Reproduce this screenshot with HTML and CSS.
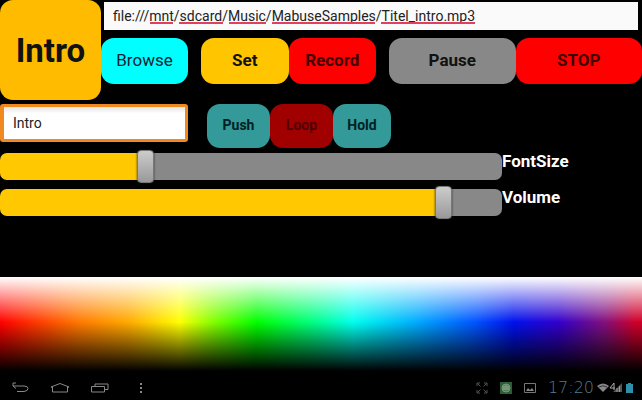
FILE: index.html
```html
<!DOCTYPE html>
<html lang="en">
<head>
  <meta charset="UTF-8">
  <title>Sample Player</title>
  <link rel="stylesheet" href="styles.css">
</head>
<body>

<main>
  <section class="top">
    <button type="button" class="pad">Intro</button>
    <div class="top-right">
      <div class="url">
        <input type="text" class="url-input" aria-label="File" spellcheck="false" value="file:///mnt/sdcard/Music/MabuseSamples/Titel_intro.mp3">
        <!-- spelling marks -->
        <svg class="marks" width="400" height="2" aria-hidden="true">
          <path d="M37 1H60M66 1H110M116 1H153M159 1H262M268 1H362" stroke="#e0405e" stroke-width="2"/>
        </svg>
      </div>
      <div class="buttons">
        <div class="group one">
          <button type="button" class="cyan">Browse</button>
        </div>
        <div class="group two">
          <button type="button" class="yellow">Set</button>
          <button type="button" class="red">Record</button>
        </div>
        <div class="group three">
          <button type="button" class="gray">Pause</button>
          <button type="button" class="red">STOP</button>
        </div>
      </div>
    </div>
  </section>

  <section class="edit">
    <input type="text" class="name-input" aria-label="Name" value="Intro">
    <div class="modes">
      <button type="button" class="teal">Push</button>
      <button type="button" class="darkred">Loop</button>
      <button type="button" class="teal hold">Hold</button>
    </div>
  </section>

  <section class="sliders">
    <div class="slider-row">
      <input type="range" id="fontsize" min="0" max="1000" value="282" style="--value: 29%">
      <label for="fontsize">FontSize</label>
    </div>
    <div class="slider-row">
      <input type="range" id="volume" min="0" max="1000" value="897" style="--value: 88%">
      <label for="volume">Volume</label>
    </div>
  </section>

  <div class="palette" role="img" aria-label="Color palette"></div>
</main>

<footer class="bar">
  <nav class="nav">
    <button type="button" aria-label="Back">
      <svg width="20" height="12" viewBox="0 0 20 12"><path d="M6 1H3V4H14Q18 4 18 6.500T14 9.500H7M3 4L6 6.500"/></svg>
    </button>
    <button type="button" aria-label="Home">
      <svg width="20" height="12" viewBox="0 0 20 12"><path d="M1 5L10 1.500L19 5H17.500V10H2.500V5Z"/></svg>
    </button>
    <button type="button" aria-label="Recent apps">
      <svg width="20" height="12" viewBox="0 0 20 12"><path d="M1.500 4.500H14.500V10H1.500ZM5 4V2H18V7.500H15"/></svg>
    </button>
    <button type="button" aria-label="Menu">
      <svg width="20" height="12" viewBox="0 0 20 12"><path d="M11 1V3M11 5V7M11 9V11" stroke-width="2"/></svg>
    </button>
  </nav>
  <div class="status">
    <svg width="12" height="12" viewBox="0 0 12 12"><path d="M4.500 4.500L1.500 1.500M1 4V1H4M7.500 4.500L10.500 1.500M8 1H11V4M4.500 7.500L1.500 10.500M1 8V11H4M7.500 7.500L10.500 10.500M8 11H11V8" stroke="#555" fill="none"/></svg>
    <svg width="12" height="12" viewBox="0 0 12 12"><path d="M0 0H12V12H0Z" fill="#2c5c34"/><circle cx="6" cy="6" r="4" fill="#4c7c54" stroke="#7a9a7a"/><path d="M4 4V8M6 3V8M8 4V8" stroke="#a0b0a0"/></svg>
    <svg width="12" height="12" viewBox="0 0 12 12"><path d="M.5 1.500H11.500V10.500H.5Z" stroke="#777" fill="none"/><path d="M2 9L4 6L6 8L8 6L10 9Z" fill="#888"/></svg>
    <time class="clock">17:20</time>
    <svg class="signal" width="38" height="12" viewBox="0 0 38 12">
      <path d="M0 4Q6 -1 12 4L6 10Z" fill="#888"/>
      <path d="M2 5Q6 2.500 10 5" stroke="#333" fill="none"/>
      <path d="M17 8V1L13 6H18" stroke="#aaa" fill="none"/>
      <path d="M25 1V10H16Z" fill="#555"/>
      <path d="M20 6V10M22.500 4V10" stroke="#999"/>
      <path d="M31 1H34V2H36V11H29V2H31Z" fill="#2e8fa8"/>
    </svg>
  </div>
</footer>

</body>
</html>
```
FILE: styles.css
```css
* {
  box-sizing: border-box;
}
body {
  margin: 0;
  min-height: 100vh;
  display: flex;
  flex-direction: column;
  background: #000;
  color: #fff;
  font-family: Roboto, "Liberation Sans", sans-serif;
}
main {
  flex: 1;
  display: flex;
  flex-direction: column;
}
button,
input {
  font-family: inherit;
  margin: 0;
  border: none;
}
button {
  padding: 0 0 3px;
  border-radius: 13px;
  font-size: 17px;
  font-weight: bold;
  color: #111;
  cursor: pointer;
}
.top {
  display: flex;
}
.pad {
  width: 101px;
  height: 100px;
  padding: 0;
  background: #fb0;
  font-size: 33px;
}
.top-right {
  flex: 1;
  padding-top: 2px;
}
.url {
  position: relative;
  margin: 0 4px 8px 3px;
}
.url-input {
  display: block;
  width: 100%;
  height: 28px;
  padding: 0 9px;
  background: #fafafa;
  font-size: 14px;
  color: #222;
}
.marks {
  position: absolute;
  left: 9px;
  top: 20px;
}
.buttons {
  display: flex;
  gap: 13px;
}
.group {
  display: flex;
  min-width: 0;
}
.group button {
  flex: 1;
  height: 46px;
}
.one {
  flex: 87;
}
.two {
  flex: 175;
}
.three {
  flex: 253;
}
.cyan {
  background: #0ff;
  color: #123;
  font-weight: normal;
}
.yellow {
  background: #ffc600;
}
.red {
  background: #f00;
  color: #400000;
}
.gray {
  background: #888;
}
.edit {
  display: flex;
  align-items: flex-start;
  gap: 19px;
  margin-top: 4px;
}
.name-input {
  width: 188px;
  height: 38px;
  padding: 0 9px;
  background: linear-gradient(#e4e4e4, #fff 20%);
  border: 3px solid #f08a20;
  border-left-width: 4px;
  border-radius: 3px;
  font-size: 14px;
  color: #222;
}
.modes {
  display: flex;
}
.modes button {
  width: 63px;
  height: 44px;
  font-size: 14px;
}
.teal {
  background: #339999;
  color: #022;
}
.modes .darkred {
  background: #a00000;
  color: #500000;
}
.modes .hold {
  width: 58px;
}
.sliders {
  margin-top: 2px;
}
.slider-row {
  display: flex;
  margin-bottom: 3px;
}
.slider-row label {
  font-size: 17px;
  line-height: 22px;
  font-weight: bold;
  width: 140px;
}
input[type="range"] {
  -webkit-appearance: none;
  appearance: none;
  flex: 1;
  min-width: 0;
  height: 33px;
  background: none;
}
input[type="range"]::-webkit-slider-runnable-track {
  height: 27px;
  border-radius: 7px;
  background: linear-gradient(to right, #ffc800 var(--value), #888 var(--value));
}
input[type="range"]::-webkit-slider-thumb {
  -webkit-appearance: none;
  width: 17px;
  height: 33px;
  margin-top: -3px;
  border: 1px solid #777;
  border-radius: 4px;
  background: linear-gradient(#ccc, #999);
  box-shadow: 0 0 2px #222;
}
.palette {
  height: 98px;
  margin-top: auto;
  background:
    linear-gradient(#fff, rgba(255,255,255,0) 46%, rgba(0,0,0,0) 46%, #000 96%),
    linear-gradient(to right, #f00, #f30 5%, #f70 12%, #fa0 20%, #ff0 28%, #8f0 33%, #0f0 40%, #0f8 49%, #0fe 55%, #0af 65%, #05f 74%, #01e 80%, #30c 87%, #80107f 94%, #d0002a 99%);
}
.bar {
  display: flex;
  justify-content: space-between;
  align-items: center;
  height: 25px;
  padding: 0 7px 0 10px;
}
.nav {
  display: flex;
  gap: 20px;
}
.nav button {
  display: flex;
  padding: 0;
  background: none;
  border-radius: 0;
}
.nav path {
  fill: none;
  stroke: #888;
}
.status {
  display: flex;
  align-items: center;
  gap: 12px;
}
.clock {
  font-family: "DejaVu Sans", sans-serif;
  font-size: 16px;
  font-weight: 200;
  line-height: 20px;
  color: #567c88;
}
.signal {
  margin-left: -9px;
}
```
